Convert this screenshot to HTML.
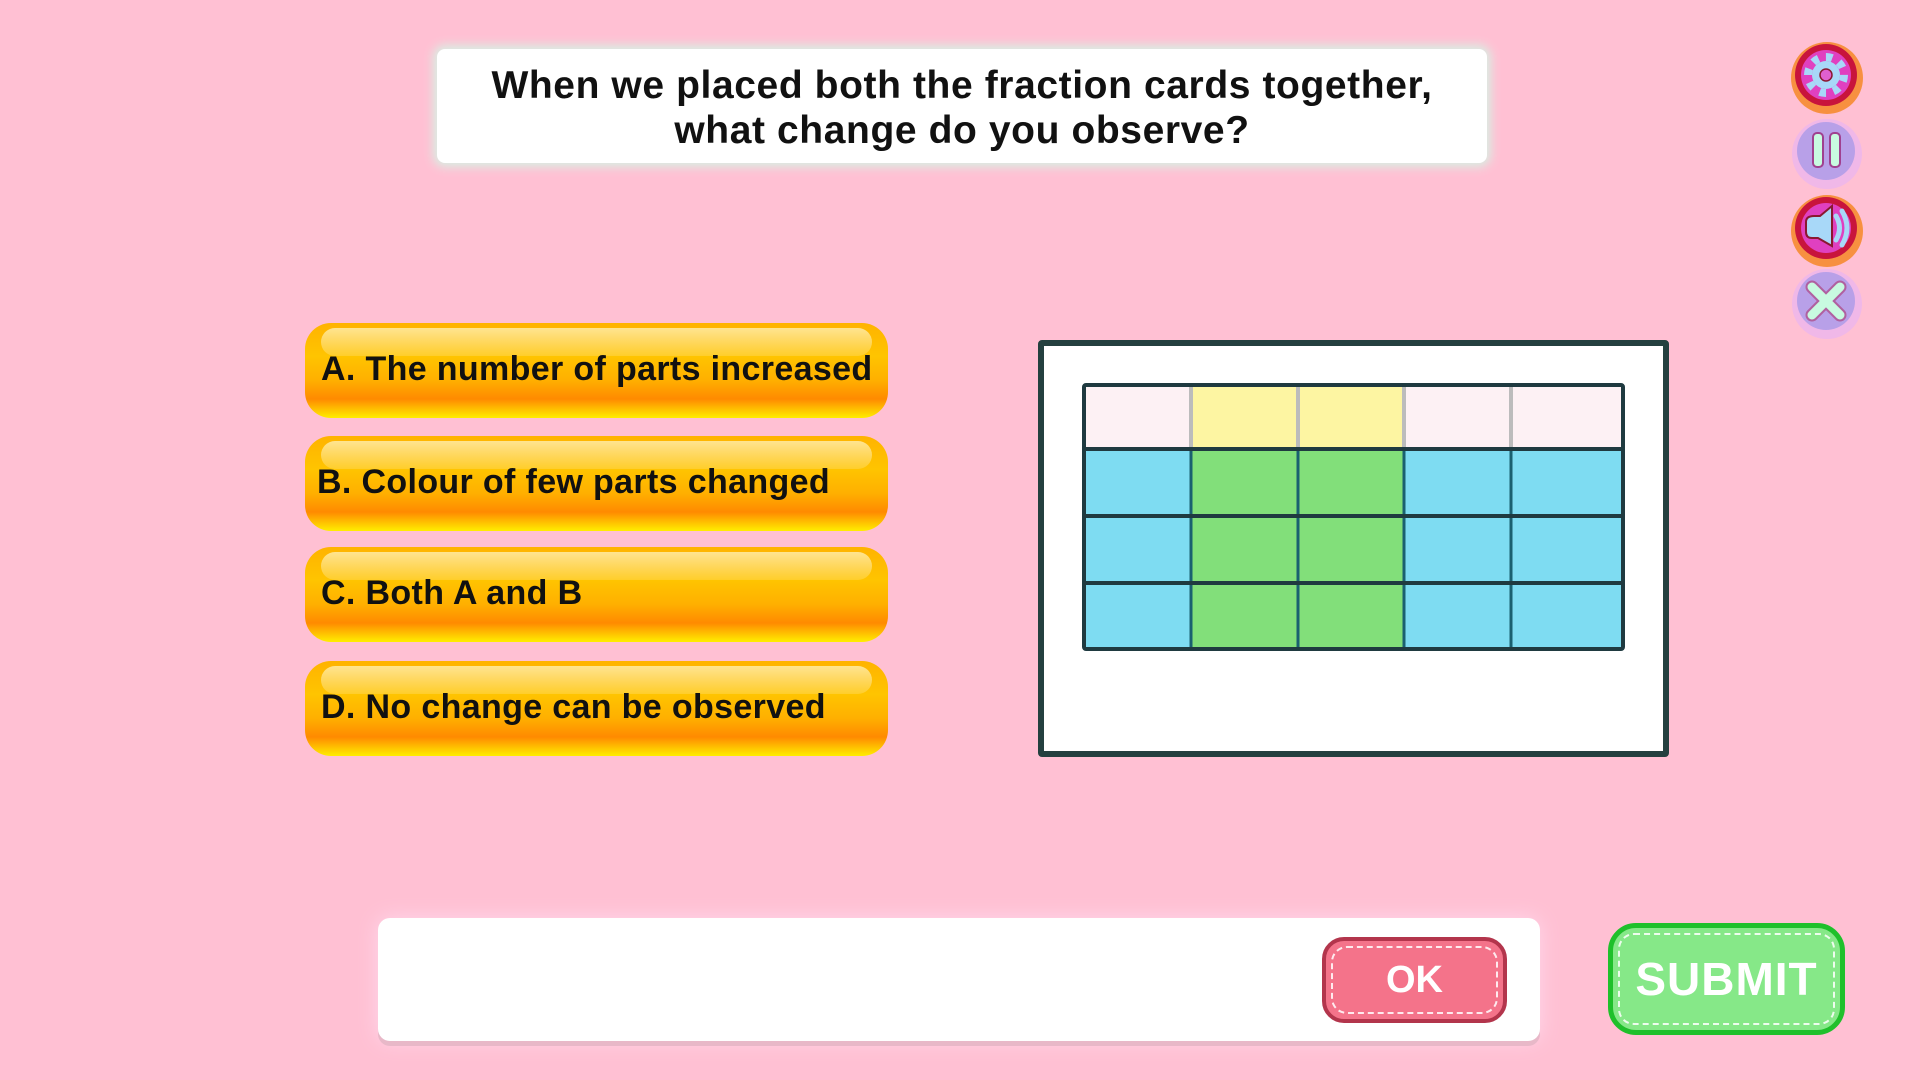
<!DOCTYPE html>
<html><head><meta charset="utf-8"><style>
*{margin:0;padding:0;box-sizing:border-box}
body{width:1920px;height:1080px;background:#ffc0d3;position:relative;overflow:hidden;font-family:"Liberation Sans","DejaVu Sans",sans-serif}
.q{position:absolute;left:437px;top:49px;width:1050px;height:114px;background:#fff;border-radius:8px;box-shadow:0 0 10px 4px #d8f0e4;text-align:center;font-weight:bold;font-size:39px;line-height:45px;padding-top:14px;color:#111;letter-spacing:0.6px}
.opt{position:absolute;left:305px;width:583px;height:95px;border-radius:26px;background:linear-gradient(#ffb300 0%,#ffc400 35%,#ffb000 60%,#ff8a00 80%,#ffee00 100%);font-weight:bold;font-size:34px;color:#111;line-height:95px;padding-left:16px;letter-spacing:0.35px}
.opt:before{content:"";position:absolute;left:16px;right:16px;top:5px;height:28px;border-radius:16px;background:linear-gradient(rgba(255,240,180,.8),rgba(255,230,140,.3))}
.opt span{position:relative;top:-1px}
.card{position:absolute;left:1038px;top:340px;width:631px;height:417px;background:#fff;border:6px solid #24403f;border-radius:4px}
.grid{position:absolute;left:1082px;top:383px;width:543px;height:268px;border:4px solid #1f3a40;border-radius:4px;overflow:hidden}
.bar{position:absolute;left:378px;top:918px;width:1162px;height:123px;background:#fff;border-radius:12px;box-shadow:0 5px 0 #e8b8c8,0 0 20px #ffd8ec}
.ok{position:absolute;left:1322px;top:937px;width:185px;height:86px;border-radius:22px;background:#f4738a;border:4px solid #b3354c;color:#fff;font-weight:bold;font-size:38px;text-align:center;line-height:78px}
.ok:after,.sub:after{content:"";position:absolute;inset:5px;border:2px dashed rgba(255,255,255,.85);border-radius:16px}
.sub{position:absolute;left:1608px;top:923px;width:237px;height:112px;border-radius:28px;background:#86e888;border:5px solid #1fc02b;color:#fff;font-weight:bold;font-size:46px;text-align:center;line-height:102px;letter-spacing:1px}
</style></head><body>
<div class="q">When we placed both the fraction cards together,<br>what change do you observe?</div>
<div class="opt" style="top:323px"><span>A. The number of parts increased</span></div>
<div class="opt" style="top:436px;padding-left:12px"><span>B. Colour of few parts changed</span></div>
<div class="opt" style="top:547px"><span>C. Both A and B</span></div>
<div class="opt" style="top:661px"><span>D. No change can be observed</span></div>
<div class="card"></div>
<div class="grid">
<svg width="543" height="268" style="position:absolute;left:-4px;top:-4px">
<rect x="0" y="0" width="543" height="66" fill="#fdf1f4"/>
<rect x="109" y="0" width="213" height="66" fill="#fdf5a2"/>
<rect x="0" y="66" width="543" height="202" fill="#7edcf2"/>
<rect x="109" y="66" width="213" height="202" fill="#82df7a"/>
<g stroke="#bcbcbc" stroke-width="4"><line x1="109" y1="0" x2="109" y2="66"/><line x1="216" y1="0" x2="216" y2="66"/><line x1="322" y1="0" x2="322" y2="66"/><line x1="429" y1="0" x2="429" y2="66"/></g>
<g stroke="#1a6070" stroke-width="3"><line x1="109" y1="66" x2="109" y2="268"/><line x1="216" y1="66" x2="216" y2="268"/><line x1="322" y1="66" x2="322" y2="268"/><line x1="429" y1="66" x2="429" y2="268"/></g>
<g stroke="#1f3a40" stroke-width="4"><line x1="0" y1="66" x2="543" y2="66"/><line x1="0" y1="133" x2="543" y2="133"/><line x1="0" y1="200" x2="543" y2="200"/></g>
</svg></div>
<svg style="position:absolute;left:1780px;top:36px" width="96" height="310">
<g><circle cx="47" cy="42" r="36" fill="#f79040"/><circle cx="46" cy="39" r="31" fill="#c8143c"/><circle cx="46" cy="39" r="25" fill="#e040c0"/>
<circle cx="46" cy="39" r="18" fill="none" stroke="#a8d8f8" stroke-width="8" stroke-dasharray="6.5 7.6"/>
<circle cx="46" cy="39" r="14" fill="#a8d8f8"/><circle cx="46" cy="39" r="6" fill="#e060d0" stroke="#8a1830" stroke-width="1.5"/></g>
<g><circle cx="47" cy="118" r="35" fill="#f0b8e8"/><circle cx="46" cy="115" r="29" fill="#b8a0e8"/><rect x="33" y="97" width="10" height="34" rx="4" fill="#c8fae0" stroke="#a04090" stroke-width="2"/><rect x="50" y="97" width="10" height="34" rx="4" fill="#c8fae0" stroke="#a04090" stroke-width="2"/></g>
<g><circle cx="47" cy="195" r="36" fill="#f79040"/><circle cx="46" cy="192" r="31" fill="#c8143c"/><circle cx="46" cy="192" r="25" fill="#e040c0"/><path d="M26 186q0-6 8-6h6l12-10v40l-14-8h-6q-6 0-6-6z" fill="#a8d8f8" stroke="#8a1830" stroke-width="2"/><path d="M56 180q7 12 0 24M62 175q10 17 0 34" stroke="#a8d8f8" stroke-width="5" fill="none" stroke-linecap="round"/></g>
<g><circle cx="47" cy="268" r="35" fill="#f0b8e8"/><circle cx="46" cy="265" r="29" fill="#b8a0e8"/><path d="M32 251l28 28M60 251l-28 28" stroke="#b060a0" stroke-width="13" stroke-linecap="round"/><path d="M32 251l28 28M60 251l-28 28" stroke="#c8fae0" stroke-width="9" stroke-linecap="round"/></g>
</svg>
<div class="bar"></div>
<div class="ok">OK</div>
<div class="sub">SUBMIT</div>
</body></html>
